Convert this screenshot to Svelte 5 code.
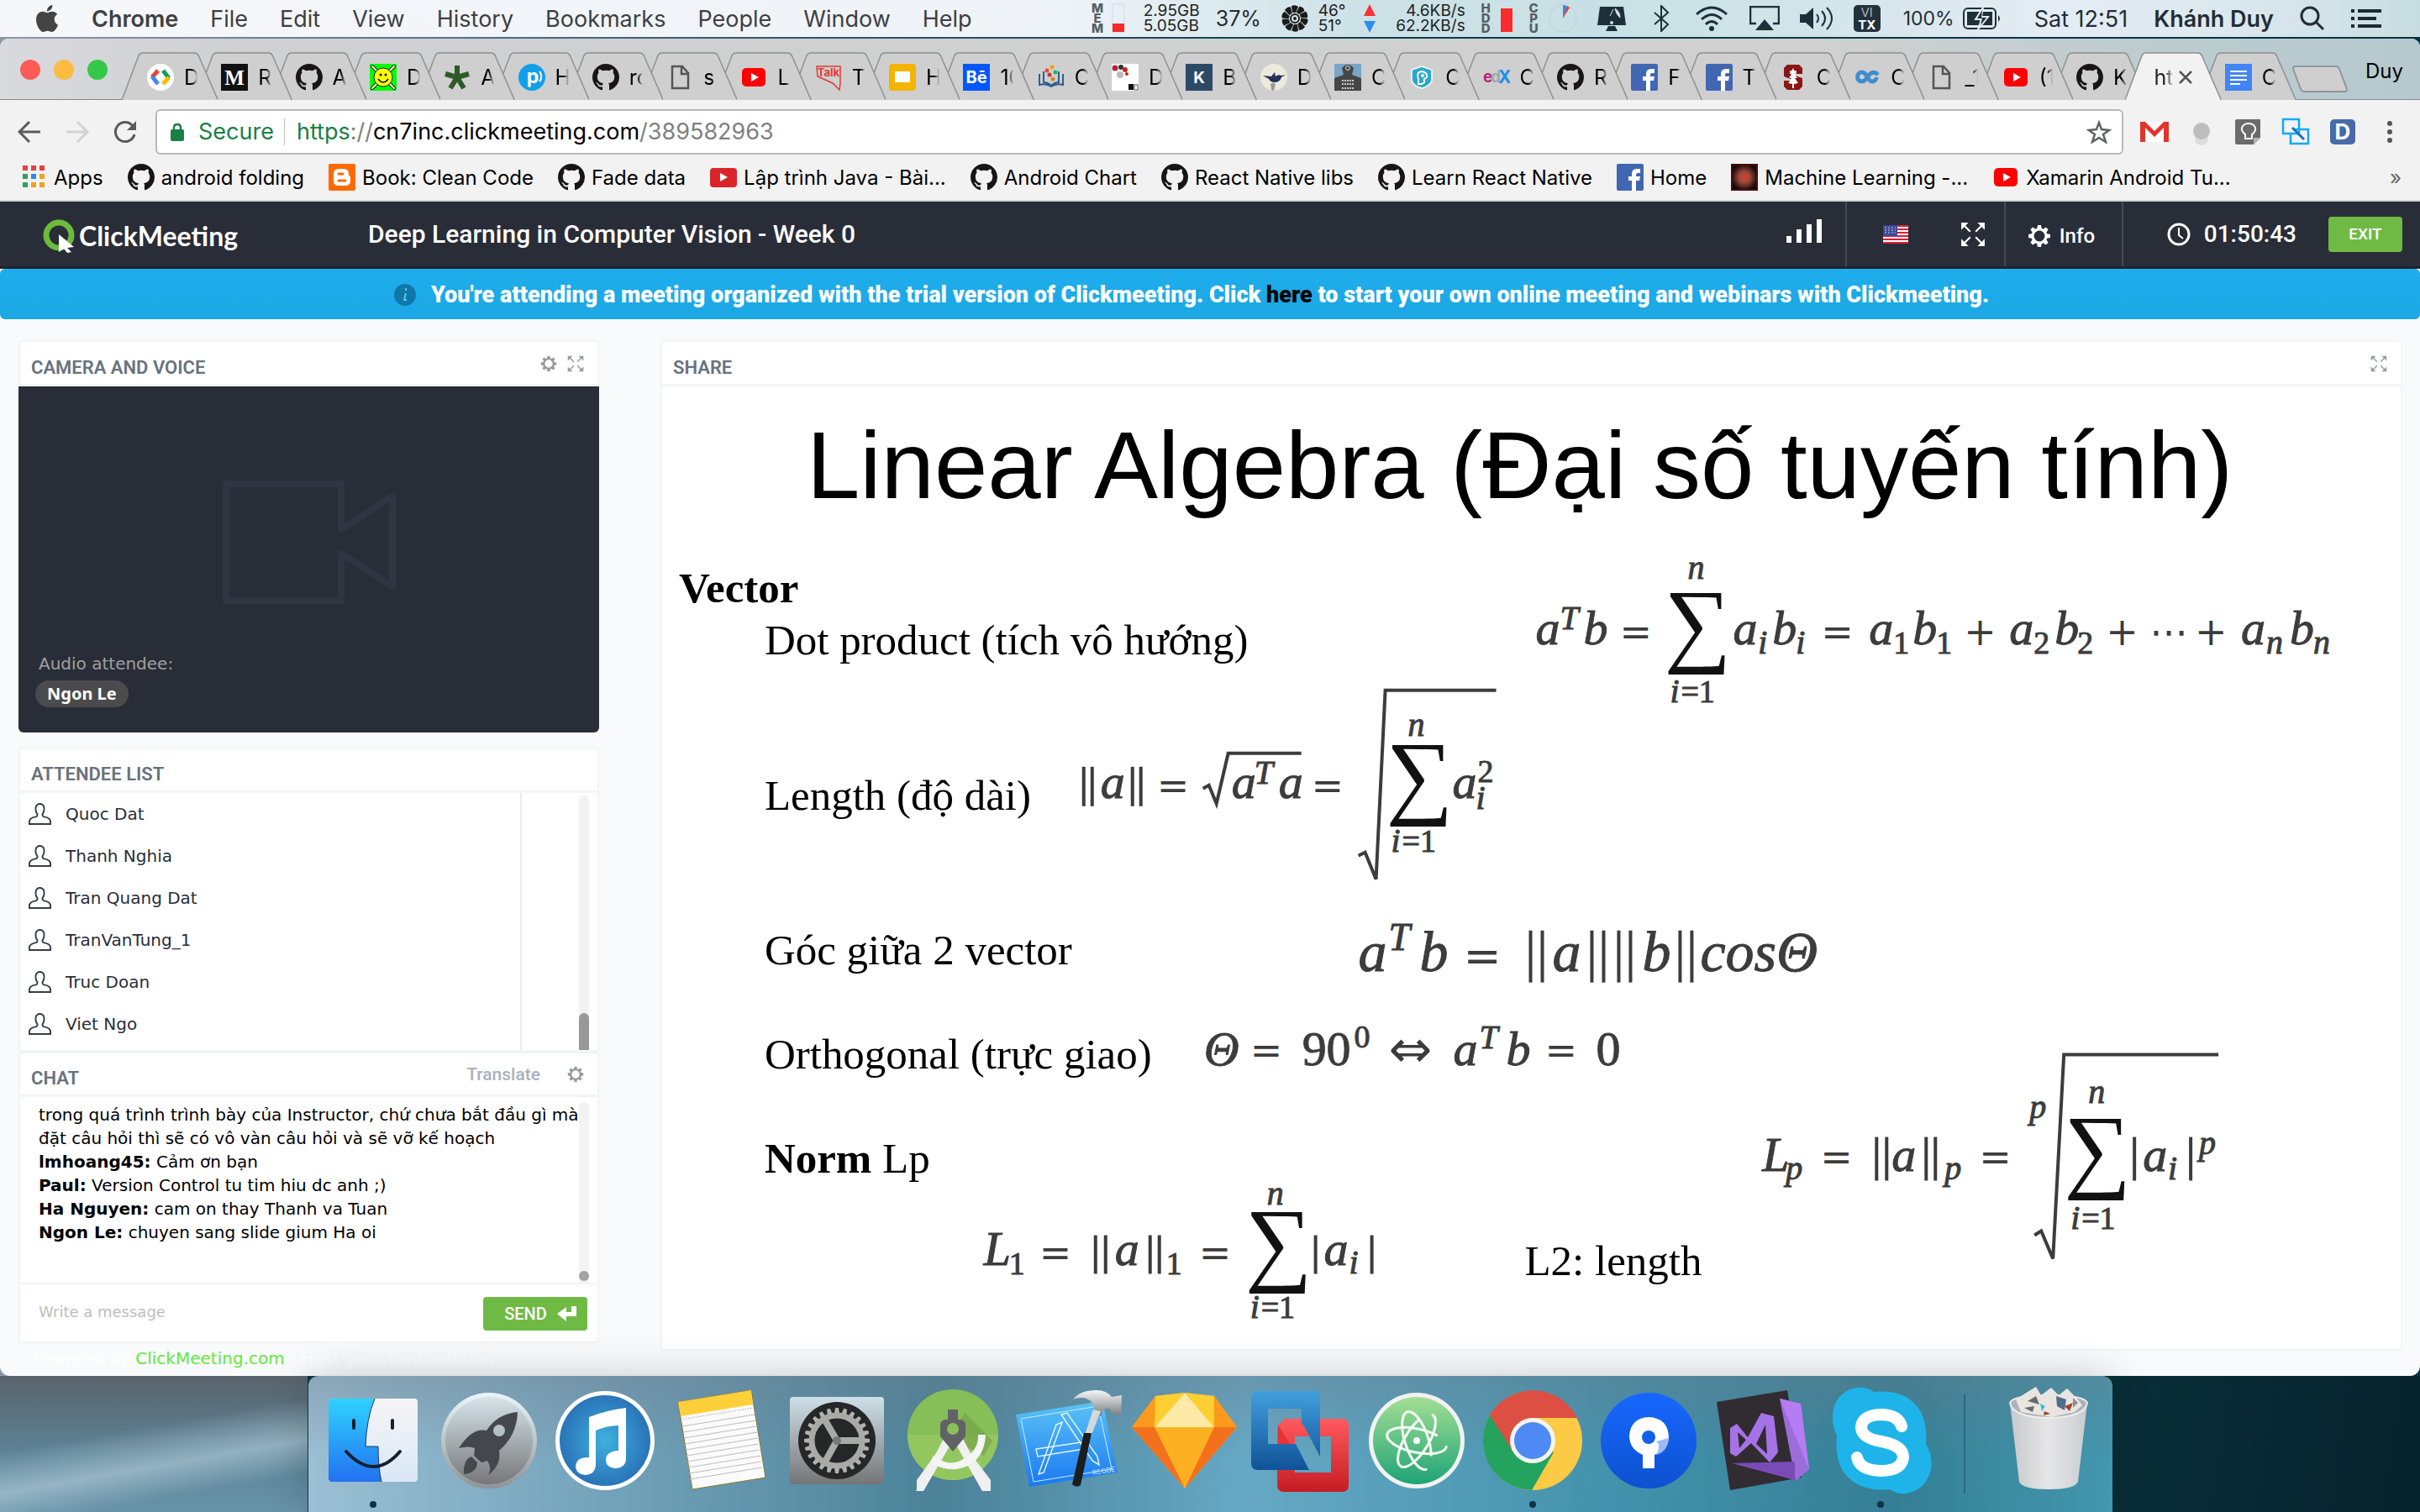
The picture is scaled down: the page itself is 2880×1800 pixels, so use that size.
<script>
  const menus = ['File', 'Edit', 'View', 'History', 'Bookmarks', 'People', 'Window', 'Help'];

  const tabs = [
    ['gdev', 'De'], ['medium', 'Re'], ['github', 'An'], ['smiley', 'De'], ['asterisk', 'An'],
    ['pcircle', 'Ho'], ['github', 'ro'], ['page', 's'], ['youtube', 'L'], ['talk', 'T'],
    ['slides', 'Ho'], ['behance', '10'], ['book', 'Co'], ['cards', 'De'], ['kbox', 'B'],
    ['bird', 'De'], ['mastery', 'Co'], ['shield', 'Co'], ['edx', 'Co'], ['github', 'Re'],
    ['facebook', 'F'], ['facebook', 'T'], ['stanford', 'Co'], ['infinity', 'Co'], ['page', '_1'],
    ['youtube', '(1'], ['github', 'K'], ['', 'ht'], ['gdoc', 'Co']
  ];
  const activeTab = 27;

  const bookmarks = [
    ['apps', 'Apps'], ['github', 'android folding'], ['blogger', 'Book: Clean Code'],
    ['github', 'Fade data'], ['youtubeOld', 'Lập trình Java - Bài...'], ['github', 'Android Chart'],
    ['github', 'React Native libs'], ['github', 'Learn React Native'], ['facebook', 'Home'],
    ['glow', 'Machine Learning -...'], ['youtube', 'Xamarin Android Tu...']
  ];

  const attendees = ['Quoc Dat', 'Thanh Nghia', 'Tran Quang Dat', 'TranVanTung_1', 'Truc Doan', 'Viet Ngo'];

  const messages = [
    ['', 'trong quá trình trình bày của Instructor, chứ chưa bắt đầu gì mà đặt câu hỏi thì sẽ có vô vàn câu hỏi và sẽ vỡ kế hoạch'],
    ['lmhoang45:', 'Cảm ơn bạn'],
    ['Paul:', 'Version Control tu tim hiu dc anh ;)'],
    ['Ha Nguyen:', 'cam on thay Thanh va Tuan'],
    ['Ngon Le:', 'chuyen sang slide gium Ha oi']
  ];

  const dock = [
    ['finder', true], ['launchpad', false], ['itunes', false], ['notes', false], ['settings', false],
    ['studio', false], ['xcode', false], ['sketch', false], ['vmware', false], ['atom', false],
    ['chrome', true], ['sourcetree', false], ['vs', false], ['skype', true]
  ];

  // Formula glyphs on the slide: [text, x, baseline, style]
  const glyphs = [
    ['a', 1828, 767, 'v'], ['T', 1857, 749, 's'], ['b', 1885, 767, 'v'], ['=', 1928, 768, 'o'],
    ['∑', 1981, 779, 'sum'], ['n', 2009, 689, 's'], ['i', 1988, 836, 's'], ['=1', 2001, 836, 'n'],
    ['a', 2063, 767, 'v'], ['i', 2093, 778, 's'], ['b', 2110, 767, 'v'], ['i', 2138, 778, 's'], ['=', 2168, 768, 'o'],
    ['a', 2225, 767, 'v'], ['1', 2254, 778, 'n'], ['b', 2277, 767, 'v'], ['1', 2305, 778, 'n'], ['+', 2338, 768, 'o'],
    ['a', 2392, 767, 'v'], ['2', 2421, 778, 'n'], ['b', 2446, 767, 'v'], ['2', 2473, 778, 'n'], ['+', 2507, 768, 'o'],
    ['⋯', 2559, 768, 'o'], ['+', 2613, 768, 'o'], ['a', 2668, 767, 'v'], ['n', 2698, 778, 's'], ['b', 2726, 767, 'v'], ['n', 2754, 778, 's'],
    ['a', 1310, 950, 'v'], ['=', 1377, 951, 'o'], ['a', 1466, 950, 'v'], ['T', 1493, 933, 's'], ['a', 1522, 950, 'v'], ['=', 1561, 951, 'o'],
    ['n', 1676, 876, 's'], ['∑', 1650, 960, 'sum'], ['i', 1656, 1014, 's'], ['=1', 1669, 1014, 'n'], ['a', 1729, 950, 'v'], ['2', 1759, 931, 'n'], ['i', 1757, 963, 's'],
    ['a', 1617, 1156, 'w'], ['T', 1653, 1131, 't'], ['b', 1690, 1156, 'w'], ['=', 1742, 1156, 'p'], ['a', 1848, 1156, 'w'],
    ['b', 1955, 1156, 'w'], ['cosΘ', 2024, 1156, 'w'],
    ['Θ', 1433, 1268, 'v'], ['=', 1488, 1266, 'o'], ['90', 1550, 1268, 'u'], ['0', 1612, 1247, 'n'], ['⇔', 1653, 1270, 'arr'],
    ['a', 1730, 1268, 'v'], ['T', 1761, 1248, 's'], ['b', 1793, 1268, 'v'], ['=', 1839, 1266, 'o'], ['0', 1900, 1268, 'u'],
    ['L', 2098, 1394, 'v'], ['p', 2126, 1404, 's'], ['=', 2167, 1393, 'o'], ['a', 2252, 1394, 'v'], ['p', 2315, 1404, 's'], ['=', 2356, 1393, 'o'],
    ['p', 2416, 1331, 's'], ['n', 2486, 1313, 's'], ['∑', 2457, 1405, 'sum'], ['i', 2465, 1463, 's'], ['=1', 2478, 1463, 'n'],
    ['a', 2551, 1394, 'v'], ['i', 2581, 1404, 's'], ['p', 2618, 1374, 's'],
    ['L', 1171, 1507, 'v'], ['1', 1201, 1518, 'n'], ['=', 1237, 1508, 'o'], ['a', 1327, 1507, 'v'], ['1', 1388, 1518, 'n'], ['=', 1427, 1508, 'o'],
    ['∑', 1482, 1517, 'sum'], ['n', 1508, 1434, 's'], ['i', 1488, 1570, 's'], ['=1', 1501, 1570, 'n'], ['a', 1576, 1507, 'v'], ['i', 1606, 1517, 's']
  ];

  const bars = [
    [1290, 913, 960], [1300, 913, 960], [1348, 913, 960], [1358, 913, 960],
    [1822, 1108, 1170], [1836, 1108, 1170], [1895, 1108, 1170], [1909, 1108, 1170],
    [1927, 1108, 1170], [1941, 1108, 1170], [2000, 1108, 1170], [2014, 1108, 1170],
    [2234, 1354, 1406], [2246, 1354, 1406], [2293, 1354, 1406], [2304, 1354, 1406], [2541, 1354, 1406], [2608, 1354, 1406],
    [1304, 1471, 1517], [1316, 1471, 1517], [1369, 1471, 1517], [1380, 1471, 1517], [1566, 1471, 1517], [1633, 1471, 1517]
  ];

  const teeth = Array.from({ length: 24 }, (_, i) => i * 15);
  const blades = Array.from({ length: 10 }, (_, i) => i * 36);
  let message = $state('');
</script>

{#snippet icon(kind)}
  <svg class="fav" viewBox="0 0 32 32" aria-hidden="true">
    {#if kind === 'github'}
      <path transform="scale(2)" fill="#171516" d="M8 0C3.58 0 0 3.58 0 8c0 3.54 2.29 6.53 5.47 7.59.4.07.55-.17.55-.38 0-.19-.01-.82-.01-1.49-2.01.37-2.53-.49-2.69-.94-.09-.23-.48-.94-.82-1.13-.28-.15-.68-.52-.01-.53.63-.01 1.08.58 1.23.82.72 1.21 1.87.87 2.33.66.07-.52.28-.87.51-1.07-1.78-.2-3.64-.89-3.64-3.95 0-.87.31-1.59.82-2.15-.08-.2-.36-1.02.08-2.12 0 0 .67-.21 2.2.82.64-.18 1.32-.27 2-.27s1.36.09 2 .27c1.53-1.04 2.2-.82 2.2-.82.44 1.1.16 1.92.08 2.12.51.56.82 1.27.82 2.15 0 3.07-1.87 3.75-3.65 3.95.29.25.54.73.54 1.48 0 1.07-.01 1.93-.01 2.2 0 .21.15.46.55.38A8.01 8.01 0 0 0 16 8c0-4.42-3.58-8-8-8z" />
    {:else if kind === 'gdev'}
      <circle cx="16" cy="16" r="16" fill="#fff" />
      <path d="M13 8L6 16" stroke="#ea4335" stroke-width="5" /><path d="M6 15l7 9" stroke="#4285f4" stroke-width="5" />
      <path d="M19 8l7 9" stroke="#0f9d58" stroke-width="5" /><path d="M26 16l-7 8" stroke="#fbbc05" stroke-width="5" />
    {:else if kind === 'medium'}
      <rect width="32" height="32" fill="#111" /><text x="16" y="25" class="serif b" font-size="25" fill="#fff" text-anchor="middle">M</text>
    {:else if kind === 'smiley'}
      <rect width="32" height="32" fill="#0f0" />
      <path d="M3 3l26 26M29 3L3 29" stroke="#222" stroke-width="4" stroke-linecap="round" /><path d="M3 3l26 26M29 3L3 29" stroke="#e8ffc8" stroke-width="2" stroke-linecap="round" />
      <circle cx="16" cy="16" r="11" fill="#ff0" stroke="#222" /><path d="M10 18q6 8 12 0" fill="none" stroke="#111" stroke-width="1.5" /><circle cx="13" cy="13" r="1.5" /><circle cx="19" cy="13" r="1.5" />
    {:else if kind === 'asterisk'}
      <path d="M16 2v15M2 12l14 4M30 12l-14 4M16 16l8 13M16 16L8 29" stroke="#2d5a27" stroke-width="6" />
    {:else if kind === 'pcircle'}
      <circle cx="16" cy="16" r="16" fill="#139fe8" /><text x="17" y="23" class="sans b" font-size="23" fill="#fff" text-anchor="middle">p</text><path d="M25 9a9 9 0 0 1 0 12" fill="none" stroke="#fff" stroke-width="2" />
    {:else if kind === 'page'}
      <path d="M7 3h12l7 8v18H7zM18 3v9h8" fill="none" stroke="#555" stroke-width="2.5" />
    {:else if kind === 'youtube'}
      <rect x="2" y="5" width="28" height="22" rx="5" fill="#f00" /><path d="M13 11l9 5-9 5z" fill="#fff" />
    {:else if kind === 'youtubeOld'}
      <rect y="5" width="32" height="23" rx="4" fill="#d9252a" /><path d="M12 11l9 5-9 5z" fill="#fff" />
    {:else if kind === 'talk'}
      <path d="M2 3h28v20l-1 8-8-8L3 15z" fill="none" stroke="#e53935" stroke-width="1.5" /><text x="16" y="15" class="sans b" font-size="13" fill="#e53935" text-anchor="middle">Talk</text>
    {:else if kind === 'slides'}
      <rect width="32" height="32" rx="4" fill="#f5b400" /><rect x="7" y="9" width="18" height="13" fill="#fff" />
    {:else if kind === 'behance'}
      <rect width="32" height="32" fill="#0057ff" /><text x="16" y="23" class="sans b" font-size="20" fill="#fff" text-anchor="middle">Bē</text>
    {:else if kind === 'book'}
      <path d="M2 12v13q8-2 14 2 6-4 14-2V12M7 9v13q5 0 9 4 4-4 9-4V9" fill="none" stroke="#2b5f8e" stroke-width="2" />
      <circle cx="11" cy="8" r="2.5" fill="#e74c3c" /><circle cx="17" cy="4" r="2.5" fill="#f39c12" /><circle cx="21" cy="10" r="2.5" fill="#27ae60" /><circle cx="14" cy="13" r="2.5" fill="#c0392b" /><circle cx="18" cy="18" r="2.5" fill="#e67e22" />
    {:else if kind === 'cards'}
      <rect width="32" height="32" fill="#fff" /><circle cx="4" cy="5" r="3.5" fill="#b23" /><circle cx="11" cy="4" r="3" fill="#333" /><circle cx="16" cy="7" r="3" fill="#c22" /><circle cx="10" cy="13" r="4" fill="#bbb" /><circle cx="18" cy="12" r="2" fill="#c22" /><rect x="20" y="24" width="6" height="7" fill="#111" /><rect x="27" y="25" width="4" height="6" fill="none" stroke="#555" />
    {:else if kind === 'kbox'}
      <rect width="32" height="32" fill="#2c4a66" /><text x="16" y="23" class="sans b" font-size="19" fill="#fff" text-anchor="middle">K</text>
    {:else if kind === 'bird'}
      <circle cx="16" cy="16" r="16" fill="#eceadb" /><path d="M3 14l10 1 4-5 1 5q3-3 7-1l5-1-5 3q-2 6-8 6-5 0-7-4z" fill="#25305a" /><path d="M12 24q3-3 6 0l-2 8-3-1z" fill="#999" />
    {:else if kind === 'mastery'}
      <rect width="32" height="32" fill="#79a5c9" /><path d="M0 32V17l11-4-2-8q7-8 14 0l-2 8 11 4v15z" fill="#464646" /><circle cx="16" cy="5" r="2.5" fill="none" stroke="#ddd" /><path d="M9 20h14M9 24h14M9 29h14" stroke="#ccc" stroke-width="2" stroke-dasharray="2 1" />
    {:else if kind === 'shield'}
      <path d="M16 3l12 4v13q-3 7-12 9Q7 27 4 20V7z" fill="#2aa9cc" stroke="#fff" stroke-width="1.5" /><path d="M12 24v-6q-3-8 4-9 7 1 6 7l-3 2v4l-3 2z" fill="none" stroke="#fff" stroke-width="2" /><circle cx="17" cy="14" r="2" fill="#fff" />
    {:else if kind === 'edx'}
      <text x="0" y="22" class="sans b" font-size="19" fill="#b7257a">e</text><text x="9" y="22" class="sans b" font-size="19" fill="#9aa">d</text><text x="18" y="23" class="sans b" font-size="21" fill="#1f8fe5">X</text>
    {:else if kind === 'facebook'}
      <rect width="32" height="32" rx="2" fill="#4267b2" /><path d="M18 32V20h-4v-5h4v-3q0-6 6-6h4v5h-3q-2 0-2 2v2h5l-1 5h-4v12z" fill="#fff" />
    {:else if kind === 'stanford'}
      <path d="M9 1h14l4 4v7h-7V8h-8v4l15 5v10l-4 4H9l-4-4v-7h7v4h8v-3L5 15V5z" fill="#8c1515" /><path d="M16 5l3 6h-2l4 6h-3l4 6h-5v6h-2v-6h-5l4-6h-3l4-6h-2z" fill="#fff" />
    {:else if kind === 'infinity'}
      <path d="M29 13q-4-4-8-2-2 1-5 5-3 5-6 5a5 5 0 0 1 0-11q3 0 6 5 3 6 6 6a5 5 0 0 0 5-5" fill="none" stroke="#3f8dd0" stroke-width="5" />
    {:else if kind === 'gdoc'}
      <rect width="32" height="32" fill="#4285f4" /><path d="M6 9h20M6 14h20M6 19h20M6 24h12" stroke="#fff" stroke-width="2" />
    {:else if kind === 'apps'}
      {#each [0, 1, 2] as r}{#each [0, 1, 2] as c}
          <rect x={3 + c * 10} y={2 + r * 10} width="6" height="6" fill={[['#e8403c', '#e8403c', '#e8403c'], ['#34a05a', '#2a8be8', '#f0a020'], ['#34a05a', '#f0a020', '#f0a020']][r][c]} />
        {/each}{/each}
    {:else if kind === 'blogger'}
      <rect width="32" height="32" rx="2" fill="#ff6a00" /><path d="M12 6h6q6 0 6 6v2q2 0 2 2v4q0 6-6 6h-8q-6 0-6-6v-8q0-6 6-6z" fill="#fff" /><path d="M12 12h5M12 20h8" stroke="#ff6a00" stroke-width="3" stroke-linecap="round" />
    {:else if kind === 'glow'}
      <defs><radialGradient id="glow"><stop offset="0" stop-color="#e03a2c" /><stop offset=".4" stop-color="#9c4a3c" /><stop offset="1" stop-color="#120808" /></radialGradient></defs>
      <rect width="32" height="32" fill="url(#glow)" /><rect x="1" y="1" width="30" height="30" fill="none" stroke="#4a0c0c" stroke-width="2" />
    {/if}
  </svg>
{/snippet}

{#snippet gear()}
  <svg viewBox="0 0 28 28" aria-hidden="true">
    <circle cx="14" cy="14" r="8" fill="none" stroke="currentColor" stroke-width="3" />
    {#each [0, 45, 90, 135, 180, 225, 270, 315] as a}
      <path d="M11 6l1-5h4l1 5z" fill="currentColor" transform="rotate({a} 14 14)" />
    {/each}
  </svg>
{/snippet}

{#snippet expand()}
  <svg viewBox="0 0 28 28" aria-hidden="true">
    <path d="M1 9V1h8zM19 1h8v8zM27 19v8h-8zM9 27H1v-8z" fill="currentColor" />
    <path d="M4 4l7 7M24 4l-7 7M24 24l-7-7M4 24l7-7" stroke="currentColor" stroke-width="2" />
  </svg>
{/snippet}

{#snippet dockIcon(kind)}
  <svg class="dock-svg" viewBox="0 0 138 162" aria-hidden="true">
    {#if kind === 'finder'}
      <defs><linearGradient id="fa" x2="0" y2="1"><stop stop-color="#2ed3ff" /><stop offset="1" stop-color="#2371f0" /></linearGradient><linearGradient id="fb" x2="0" y2="1"><stop stop-color="#f6f5f6" /><stop offset="1" stop-color="#d9e7f6" /></linearGradient></defs>
      <rect x="16" y="27" width="106" height="99" rx="4" fill="url(#fb)" />
      <path d="M20 27h51q-10 24-11 57h15q0 24 4 42H20q-4 0-4-4V31q0-4 4-4z" fill="url(#fa)" />
      <path d="M71 27q-10 24-11 57h15q0 24 4 42" fill="none" stroke="#1c3a5c" />
      <path d="M37 90q33 36 64 0" fill="none" stroke="#122030" stroke-width="4" stroke-linecap="round" /><path d="M46 53v9M92 53v9" stroke="#122030" stroke-width="4" stroke-linecap="round" />
    {:else if kind === 'launchpad'}
      <defs><linearGradient id="la" x2="0" y2="1"><stop stop-color="#d6e4ea" /><stop offset="1" stop-color="#767779" /></linearGradient><linearGradient id="lb" x2="0" y2="1"><stop stop-color="#e9f7fc" /><stop offset="1" stop-color="#8f9496" /></linearGradient></defs>
      <circle cx="69" cy="77" r="57" fill="url(#lb)" /><circle cx="69" cy="77" r="52" fill="url(#la)" />
      <path d="M103 43q-24 2-37 22-17-4-33 21 12-3 19 0l-1 9 9 8 7-2q6 9 1 17 16-12 13-29 21-18 22-46z" fill="#44484c" /><path d="M48 96q-10 4-9 21 16-2 16-14z" fill="#44484c" /><circle cx="81" cy="65" r="7" fill="#b7c0c4" />
    {:else if kind === 'itunes'}
      <defs><radialGradient id="ia"><stop stop-color="#3fb0de" /><stop offset="1" stop-color="#2a74b8" /></radialGradient></defs>
      <circle cx="69" cy="77" r="59" fill="#fff" /><circle cx="69" cy="77" r="54" fill="url(#ia)" />
      <path d="M50 49q20-8 44-11v60q0 11-12 12-12-1-12-10 0-9 12-11h3V59q-14 0-27 6v42q-1 10-12 11-12-1-12-11 1-9 12-10h4z" fill="#fff" />
    {:else if kind === 'notes'}
      <path d="M18 31l87-14 17 104-87 14z" fill="#fbfbfb" stroke="#8a7a2a" /><path d="M18 31l87-14 2 17-86 14z" fill="#fdd03a" />
      <path d="M21 52l86-14" stroke="#888" stroke-dasharray="1 2" />
      {#each [0, 1, 2, 3, 4, 5, 6, 7, 8, 9] as n}<path d="M{23 + n} {60 + n * 7}l86-14" stroke="#bcbcbc" />{/each}
    {:else if kind === 'settings'}
      <defs><linearGradient id="sa" x2="0" y2="1"><stop stop-color="#cfe0e8" /><stop offset="1" stop-color="#747577" /></linearGradient></defs>
      <rect x="13" y="25" width="112" height="104" rx="4" fill="url(#sa)" /><circle cx="69" cy="77" r="46" fill="#262729" />
      {#each teeth as a}<path d="M66 45l1-7h4l1 7z" fill="#b2b2ae" transform="rotate({a} 69 77)" />{/each}
      <circle cx="69" cy="77" r="30" fill="none" stroke="#a9a9a5" stroke-width="7" />
      <path d="M69 77h28M69 77L55 53M69 77l-14 25" stroke="#a9a9a5" stroke-width="8" /><circle cx="69" cy="77" r="5" fill="#777" />
    {:else if kind === 'studio'}
      <circle cx="69" cy="70" r="54" fill="#86be58" /><path d="M15 70a54 54 0 0 0 108 0z" fill="#94c660" /><path d="M83 44l33 33-10 18-40-20z" fill="#6f9f45" opacity=".6" />
      <path d="M62 74L26 124v13l8-9 32-47zM76 74l38 50v13l-8-9-34-48z" fill="#eee" /><path d="M34 137l-9 0 34-64 10 4zM104 137h10L80 73l-10 4z" fill="#f0f0f0" />
      <path d="M46 95q20 16 38 2 16-10 15-27h9q-1 26-21 37-22 10-45-4z" fill="#f5f5f5" />
      <path d="M63 40h12v12h4q5 2 5 6v14L69 90 54 72V58q0-4 5-6h4z" fill="#616266" /><circle cx="69" cy="63" r="7" fill="#8ac058" />
    {:else if kind === 'xcode'}
      <defs><linearGradient id="xa" x2="0" y2="1"><stop stop-color="#5bc4f5" /><stop offset="1" stop-color="#1a78f0" /></linearGradient><linearGradient id="xb" x2="0" y2="1"><stop stop-color="#f6f6f6" /><stop offset="1" stop-color="#777b80" /></linearGradient></defs>
      <path d="M6 46l103-16 18 85-105 17z" fill="url(#xa)" /><path d="M12 51l92-15 16 75-93 15z" fill="none" stroke="#c9ebff" />
      <path d="M30 87l60-9 2 8-60 10zM54 58l7-3-22 60-6 2zM60 46l7-2 36 52 2 10-8-5z" fill="none" stroke="#e3f5ff" stroke-width="1.5" />
      <text x="97" y="118" class="sans" font-size="8" fill="#d9f0ff" transform="rotate(-9 97 118)">XCODE</text>
      <path d="M74 28q8-11 28-11 12 0 18 8l12-2-1 24-10-2-4-7-6 2q-3 2-3 8l-10-2q2-9-2-15-8-8-22-3z" fill="url(#xb)" /><path d="M98 40l9 2-11 28h-8z" fill="#d5d7da" /><path d="M87 68h9l-13 62q-5 4-10-1z" fill="#1c1d1f" />
    {:else if kind === 'sketch'}
      <path d="M34 24l35-4 35 4 27 37-62 73L6 61z" fill="#fdb021" /><path d="M34 24L6 61h27zM104 24l27 37h-27z" fill="#fb9a1c" /><path d="M6 61h27l36 73z" fill="#f3701d" /><path d="M131 61h-27l-35 73z" fill="#f3701d" />
      <path d="M69 20L33 61h71z" fill="#fdeaa6" /><path d="M34 24l35-4-36 41zM104 24l-35-4 35 41z" fill="#fdcf33" />
    {:else if kind === 'vmware'}
      <defs><linearGradient id="va" x2="0" y2="1"><stop stop-color="#429fdd" /><stop offset="1" stop-color="#0f5298" /></linearGradient><linearGradient id="vb" x2="0" y2="1"><stop stop-color="#ff5a5f" /><stop offset="1" stop-color="#c41c22" /></linearGradient></defs>
      <path fill-rule="evenodd" d="M50 51h68q8 0 8 8v71q0 8-8 8H49q-8 0-8-8V60zM62 72v43h43V72z" fill="url(#vb)" />
      <path fill-rule="evenodd" d="M19 18h65q8 0 8 8v70L72 58h-2V39H30v42h33l16 31H18q-8 0-8-8V26q0-8 9-8z" fill="url(#va)" />
      <path d="M42 58v23h14z" fill="#e63238" />
    {:else if kind === 'atom'}
      <defs><linearGradient id="aa" x2="0" y2="1"><stop stop-color="#a4de94" /><stop offset="1" stop-color="#1ea477" /></linearGradient></defs>
      <circle cx="69" cy="77" r="57" fill="#f2f2f2" /><circle cx="69" cy="77" r="52" fill="url(#aa)" />
      <g fill="none" stroke="#f4fff4" stroke-width="3" stroke-linecap="round"><ellipse cx="69" cy="77" rx="36" ry="14" transform="rotate(12 69 77)" stroke-dasharray="145 20" /><ellipse cx="69" cy="77" rx="36" ry="14" transform="rotate(72 69 77)" stroke-dasharray="145 20" /><ellipse cx="69" cy="77" rx="36" ry="14" transform="rotate(-58 69 77)" stroke-dasharray="145 20" /></g><circle cx="69" cy="77" r="4" fill="#fff" />
    {:else if kind === 'chrome'}
      <circle cx="69" cy="77" r="59" fill="#fcca45" /><path d="M18 47a59 59 0 0 0 50 89l26-45-25-14z" fill="#24a35e" /><path d="M18 47a59 59 0 0 1 104 3H69v27z" fill="#dd4f43" /><path d="M18 47l28 44 23-14z" fill="#dd4f43" />
      <circle cx="69" cy="77" r="27" fill="#f4f4f4" /><circle cx="69" cy="77" r="22" fill="#4d8af4" />
    {:else if kind === 'sourcetree'}
      <defs><linearGradient id="st" x2="0" y2="1"><stop stop-color="#1768ff" /><stop offset="1" stop-color="#0d51cf" /></linearGradient></defs>
      <circle cx="69" cy="77" r="57" fill="url(#st)" /><path d="M62 110V94Q46 87 46 71q2-21 23-22 23 1 24 24-1 14-17 21v16z" fill="#fff" /><circle cx="69" cy="73" r="8" fill="#1160ea" /><path d="M78 78q6 4 0 16 14-4 15-20z" fill="#9dbcf5" />
    {:else if kind === 'vs'}
      <path d="M12 31l84-14 17 104-85 15z" fill="#302c31" /><path d="M87 27l25 6 10 78-16 14z" fill="#9d6cdb" /><path d="M87 27l25 6 10 78z" fill="#b57cf3" /><path d="M30 104l75-2v22z" fill="#7a4bb8" />
      <path fill-rule="evenodd" d="M28 62l8-5 13 16 16-29 15 4 5 43-10 12-22-23-18 16-7-4zM37 67l2 19 8-10zM70 58l-11 23 13 12z" fill="#a673e6" />
    {:else if kind === 'skype'}
      <path d="M41 14q12-1 20 5 40-4 56 24 8 16 6 38 10 16 5 34-7 21-28 25-12 1-20-5-38 4-56-22-10-18-7-42-6-12-5-26Q16 18 41 14z" fill="#1fb4e9" />
      <path d="M94 60Q90 46 69 46q-23 1-23 16 1 12 24 16 26 5 26 19-2 16-27 16-25-1-28-16" fill="none" stroke="#fff" stroke-width="14" stroke-linecap="round" />
    {:else if kind === 'trash'}
      <defs><linearGradient id="ta"><stop stop-color="#c6c9cc" /><stop offset=".5" stop-color="#e6e6e8" /><stop offset="1" stop-color="#c9cdd0" /></linearGradient></defs>
      <path d="M23 32h92l-11 94q-4 9-35 9t-35-9z" fill="url(#ta)" /><path d="M23 32q3-9 46-9t46 9q-3 17-46 18-43-1-46-18z" fill="#a9b3b8" stroke="#eee" stroke-width="2" />
      <path d="M30 28l14-9 10-6 6 10 12-9 9 9 10-8 12 12 6 8-9 8-28 6-36-6z" fill="#e9e6e2" /><path d="M44 30l10-6 4 10zM40 38l12-2-2 7z" fill="#6a6a6a" /><path d="M78 24l12 4-2 13-9-5z" fill="#4f6d8d" /><path d="M59 33l6 3-4 6z" fill="#2cc0d8" /><path d="M88 36l10-4-4 10zM64 42l7 3-8 2z" fill="#a2432c" /><path d="M98 26l6 6-6 6z" fill="#8a8f94" />
    {/if}
  </svg>
{/snippet}

<div class="desktop">
  <header class="menubar">
    <svg class="apple" viewBox="0 0 24 24" aria-label="Apple menu"><path d="M12.152 6.896c-.948 0-2.415-1.078-3.96-1.04-2.04.027-3.91 1.183-4.961 3.014-2.117 3.675-.546 9.103 1.519 12.09 1.013 1.454 2.208 3.09 3.792 3.039 1.52-.065 2.09-.987 3.935-.987 1.831 0 2.35.987 3.96.948 1.637-.026 2.676-1.48 3.676-2.948 1.156-1.688 1.636-3.325 1.662-3.415-.039-.013-3.182-1.221-3.22-4.857-.026-3.04 2.48-4.494 2.597-4.559-1.429-2.09-3.623-2.324-4.39-2.376-2-.156-3.675 1.09-4.61 1.09zM15.53 3.83c.843-1.012 1.4-2.427 1.245-3.83-1.207.052-2.662.805-3.532 1.818-.78.896-1.454 2.338-1.273 3.714 1.338.104 2.715-.688 3.559-1.701" fill="#444" /></svg>
    <nav class="menus">
      <b>Chrome</b>
      {#each menus as m}<span>{m}</span>{/each}
    </nav>
    <div class="status">
      <span class="stack3"><i>M</i><i>E</i><i>M</i></span>
      <svg class="w16" viewBox="0 0 16 36"><rect x="1" y="1" width="14" height="34" rx="2" fill="none" stroke="#dfe6ea" stroke-width="2" /><rect x="1" y="24" width="14" height="10" fill="#f32a2a" /></svg>
      <span class="two mem">2.95GB<br />5.05GB</span>
      <span class="pct">37%</span>
      <svg class="w32" viewBox="0 0 32 32">
        {#each blades as a}<path d="M13 9L12 1q5-2 8 1l-3 7z" fill="#1b1b1b" transform="rotate({a} 16 16)" />{/each}
        <circle cx="16" cy="16" r="5" fill="none" stroke="#1b1b1b" stroke-width="2" /><circle cx="16" cy="16" r="2" fill="#1b1b1b" />
      </svg>
      <span class="two temp">46°<br />51°</span>
      <svg class="w16 arrows" viewBox="0 0 16 36"><path d="M8 1l7 14H1z" fill="#f6303a" /><path d="M8 35L1 21h14z" fill="#2a8df0" /></svg>
      <span class="two rate">4.6KB/s<br />62.2KB/s</span>
      <span class="stack3 hdd"><i>H</i><i>D</i><i>D</i></span>
      <svg class="w16" viewBox="0 0 16 36"><rect x="1" y="1" width="14" height="34" rx="2" fill="none" stroke="#d3e2e6" stroke-width="2" /><rect x="1" y="6" width="14" height="28" fill="#f82c2c" /></svg>
      <span class="stack3 cpu"><i>C</i><i>P</i><i>U</i></span>
      <svg class="w36" viewBox="0 0 36 36"><circle cx="18" cy="18" r="16" fill="none" stroke="#c3d8dd" stroke-width="2" /><path d="M18 18V2l5 1z" fill="#2a8df0" /><path d="M18 18l5-15 3 2z" fill="#f33" /></svg>
      <svg class="w36 clean" viewBox="0 0 36 30"><path d="M4 1h28l3 22H1zM14 24h8l3 6H11z" fill="#1d2f38" /><path d="M22 3q6 4 6 11-5-4-6-11zM20 4l-4 8" stroke="#cfe0e5" fill="#cfe0e5" /><circle cx="18" cy="20" r="2" fill="#cfe0e5" /></svg>
      <svg class="w20 bt" viewBox="0 0 20 32"><path d="M2 9l16 14-8 8V1l8 8L2 23" fill="none" stroke="#1d2f38" stroke-width="2" /></svg>
      <svg class="w40 wifi" viewBox="0 0 40 30"><path d="M2 10q18-16 36 0M8 16q12-11 24 0M13 22q7-7 14 0" fill="none" stroke="#1d2f38" stroke-width="3" /><circle cx="20" cy="27" r="3" fill="#1d2f38" /></svg>
      <svg class="w36 air" viewBox="0 0 36 30"><path d="M8 21H1V1h34v20h-7" fill="none" stroke="#1d2f38" stroke-width="2.5" /><path d="M18 16l11 13H7z" fill="#1d2f38" /></svg>
      <svg class="w42 vol" viewBox="0 0 42 30"><path d="M0 10h7l9-8v26l-9-8H0z" fill="#1d2f38" /><path d="M20 10q4 5 0 10M26 6q8 9 0 18M32 2q12 13 0 26" fill="none" stroke="#1d2f38" stroke-width="2" /></svg>
      <span class="lang"><i>VI</i><b>TX</b></span>
      <span class="batt">100%</span>
      <svg class="w46" viewBox="0 0 46 26"><rect x="1" y="1" width="38" height="24" rx="5" fill="none" stroke="#1d2f38" stroke-width="2" /><rect x="5" y="5" width="30" height="16" fill="#1d2f38" /><path d="M24 0l-9 14h7l-4 12 12-15h-8z" fill="#e4eaf2" stroke="#e4eaf2" stroke-width="2" /><path d="M23 3l-6 10h6l-2 8 7-9h-6z" fill="#1d2f38" /><path d="M42 9q4 4 0 8z" fill="#1d2f38" /></svg>
      <span class="clock">Sat 12:51</span>
      <b class="user">Khánh Duy</b>
      <svg class="w30 find" viewBox="0 0 30 30"><circle cx="12" cy="12" r="10" fill="none" stroke="#222d33" stroke-width="3" /><path d="M19 19l9 9" stroke="#222d33" stroke-width="3" /></svg>
      <svg class="w36 list" viewBox="0 0 36 22"><path d="M0 2h4M0 11h4M0 20h4M8 2h28M8 11h22M8 20h28" stroke="#1d2a30" stroke-width="4" /></svg>
    </div>
  </header>

  <main class="window">
    <div class="tabstrip">
      <div class="lights"><button aria-label="Close" class="red"></button><button aria-label="Minimise" class="amber"></button><button aria-label="Zoom" class="green"></button></div>
      <div class="tabs">
        {#each tabs as [kind, label], i}
          <div class="tab" class:active={i === activeTab} style="z-index:{i === activeTab ? 60 : 40 - i}">
            <svg class="shape" viewBox="0 0 114 57" preserveAspectRatio="none" aria-hidden="true"><path d="M0 57L20 4q2-3 4-3h63q2 0 4 3l23 53" /></svg>
            {#if kind}{@render icon(kind)}{/if}
            <span class="label">{label}</span>
            {#if i === activeTab}<button class="close" aria-label="Close tab"><svg viewBox="0 0 16 16"><path d="M1 1l14 14M15 1L1 15" stroke="#555" stroke-width="2.5" /></svg></button>{/if}
          </div>
        {/each}
      </div>
      <div class="strip-end">
        <button class="newtab" aria-label="New tab"><svg viewBox="0 0 66 32"><path d="M3 1h49q3 0 4 3l9 24q0 3-3 3H14q-3 0-4-3L1 4q0-3 2-3z" fill="#cfcfcf" stroke="#8f9799" stroke-width="2" /></svg></button>
        <span class="profile">Duy</span>
      </div>
    </div>

    <div class="toolbar">
      <button class="nav" aria-label="Back"><svg viewBox="0 0 28 28"><path d="M27 14H3M14 2L2 14l12 12" fill="none" stroke="#5a5a5a" stroke-width="3" /></svg></button>
      <button class="nav" aria-label="Forward"><svg viewBox="0 0 28 28"><path d="M1 14h24M14 2l12 12-12 12" fill="none" stroke="#d2d2d2" stroke-width="3" /></svg></button>
      <button class="nav" aria-label="Reload"><svg viewBox="0 0 28 28"><path d="M23 7a11.500 11.500 0 1 0 2 10" fill="none" stroke="#5a5a5a" stroke-width="3" /><path d="M27 1v11H16z" fill="#5a5a5a" /></svg></button>
      <div class="omnibox">
        <svg class="lock" viewBox="0 0 16 22"><rect y="8" width="16" height="14" rx="2" fill="#188045" /><path d="M4 9V6q0-4 4-4t4 4v3" fill="none" stroke="#188045" stroke-width="2.500" /></svg>
        <span class="secure">Secure</span>
        <span class="bar"></span>
        <a class="url" href="https://cn7inc.clickmeeting.com/389582963"><span class="g">https</span><span class="m">://</span>cn7inc.clickmeeting.com<span class="m">/389582963</span></a>
        <svg class="star" viewBox="0 0 30 28"><path d="M15 3l3 8 9 1-7 5 3 9-8-5-8 5 3-9-7-5 9-1z" fill="none" stroke="#5f6368" stroke-width="2.500" /></svg>
      </div>
      <div class="exts">
        <svg viewBox="0 0 34 34"><rect y="5" width="34" height="24" fill="#e0352b" /><path d="M6 5h22L17 16zM6 12l11 11 11-11v17H6z" fill="#fff" /></svg>
        <svg viewBox="0 0 34 34"><circle cx="17" cy="25" r="8" fill="#dcdcdc" /><circle cx="17" cy="16" r="10" fill="#bdbdbd" /></svg>
        <svg viewBox="0 0 34 34"><path d="M3 2h28v22l-8 8H3q-2 0-2-2V4q0-2 2-2z" fill="#6b6b6b" /><path d="M31 24h-8v8z" fill="#b5b5b5" /><path d="M13 20q-5-4-4-8 2-5 8-5t8 5q1 4-4 8v5h-8z" fill="none" stroke="#fff" stroke-width="2" /></svg>
        <svg viewBox="0 0 34 34"><path d="M2 2h19v17H2zM15 14h17v17H11V19" fill="none" stroke="#14a9f5" stroke-width="2.500" /><path d="M13 12l14 14" stroke="#1673b8" stroke-width="3" /></svg>
        <svg viewBox="0 0 34 34"><rect x="2" y="2" width="30" height="30" rx="5" fill="#466ba8" /><text x="17" y="26" class="sans b" font-size="26" fill="#fff" text-anchor="middle">D</text></svg>
        <svg viewBox="0 0 34 34" class="dots"><circle cx="17" cy="7" r="3" /><circle cx="17" cy="17" r="3" /><circle cx="17" cy="27" r="3" /></svg>
      </div>
    </div>

    <nav class="bookmarks">
      {#each bookmarks as [kind, label]}
        <a href="#{kind}">{@render icon(kind)}<span>{label}</span></a>
      {/each}
      <button class="more" aria-label="More bookmarks">»</button>
    </nav>

    <header class="cm-head">
      <div class="logo">
        <svg viewBox="0 0 38 40" aria-hidden="true"><circle cx="19" cy="19" r="15" fill="none" stroke="#6cbc3c" stroke-width="7" /><path d="M19 18l18 15-8 1 5 5-5 1-4-5-6 4z" fill="#fff" /></svg>
        <span>ClickMeeting</span>
      </div>
      <h1>Deep Learning in Computer Vision - Week 0</h1>
      <div class="cell signal"><svg viewBox="0 0 42 28"><path d="M3 20v8M15 12v16M27 6v22M39 0v28" stroke="#fff" stroke-width="6" /></svg></div>
      <div class="cell lang-cell">
        <svg class="flag" viewBox="0 0 30 22"><rect width="30" height="22" fill="#fff" /><path d="M0 1h30M0 5h30M0 9h30M0 13h30M0 17h30M0 21h30" stroke="#e01f36" stroke-width="2" /><rect width="17" height="13" fill="#3c4a96" /><path d="M2 3h13M2 6h13M2 9h13" stroke="#c9cfea" stroke-dasharray="2 2" /></svg>
        <button class="full" aria-label="Full screen">{@render expand()}</button>
      </div>
      <button class="cell info">{@render gear()}<span>Info</span></button>
      <div class="cell timer"><svg viewBox="0 0 28 28"><circle cx="14" cy="14" r="12" fill="none" stroke="#fff" stroke-width="3" /><path d="M14 6v9l5 4" fill="none" stroke="#fff" stroke-width="2" /></svg><span>01:50:43</span></div>
      <button class="exit">EXIT</button>
    </header>

    <p class="banner"><svg viewBox="0 0 26 26" aria-hidden="true"><circle cx="13" cy="13" r="13" fill="#0f78a8" /><path d="M14 5v3M14 11l-2 8h3" stroke="#5cc3ec" stroke-width="2" fill="none" /></svg><span>You're attending a meeting organized with the trial version of Clickmeeting. Click <a href="#here">here</a> to start your own online meeting and webinars with Clickmeeting.</span></p>

    <div class="room">
      <div class="side">
        <section class="panel camera">
          <div class="phead"><h2>CAMERA AND VOICE</h2><span class="tools"><button aria-label="Camera settings">{@render gear()}</button><button aria-label="Expand camera">{@render expand()}</button></span></div>
          <div class="video">
            <svg viewBox="0 0 206 147" aria-hidden="true"><path d="M4 4h137v54l61-39v107l-61-39v56H4z" fill="none" stroke="#313541" stroke-width="8" stroke-linejoin="round" /></svg>
            <div class="audio"><span>Audio attendee:</span><b>Ngon Le</b></div>
          </div>
        </section>

        <section class="panel attendees">
          <div class="phead short"><h2>ATTENDEE LIST</h2></div>
          <div class="alist">
            <ul>
              {#each attendees as name}
                <li><svg viewBox="0 0 28 27" aria-hidden="true"><path d="M1 26v-4q1-4 8-5 2-1 2-3-3-4-2-9 1-4 5-4t5 4q1 5-2 9 0 2 2 3 7 1 8 5v4z" fill="none" stroke="#3a3d48" stroke-width="2" /></svg><span>{name}</span></li>
              {/each}
            </ul>
            <div class="track"><span class="thumb"></span></div>
          </div>
        </section>

        <section class="panel chat">
          <div class="phead short"><h2>CHAT</h2><span class="tools"><button class="translate">Translate</button><button aria-label="Chat settings">{@render gear()}</button></span></div>
          <div class="log">
            {#each messages as [who, text]}<p>{#if who}<b>{who}</b>{' '}{/if}{text}</p>{/each}
            <div class="track"><span class="thumb dot"></span></div>
          </div>
          <form class="compose" onsubmit={(e) => e.preventDefault()}>
            <input aria-label="Message" placeholder="Write a message" bind:value={message} />
            <button><span>SEND</span><svg viewBox="0 0 24 18" aria-hidden="true"><path d="M23 0v12H11v6L0 9l11-8v6h6V0z" fill="#fff" /></svg></button>
          </form>
        </section>
        <p class="powered">Powered by <a href="#clickmeeting">ClickMeeting.com</a> - Host your own webinar</p>
      </div>

      <section class="panel share">
        <div class="phead"><h2>SHARE</h2><span class="tools"><button aria-label="Expand share">{@render expand()}</button></span></div>
        <svg class="slide" viewBox="788 460 2070 1146" role="img" aria-label="Linear Algebra slide">
          <text x="960" y="593" class="title">Linear Algebra (Đại số tuyến tính)</text>
          <g class="body">
            <text x="808" y="717" class="b">Vector</text>
            <text x="910" y="779">Dot product (tích vô hướng)</text>
            <text x="910" y="964">Length (độ dài)</text>
            <text x="910" y="1148">Góc giữa 2 vector</text>
            <text x="910" y="1272">Orthogonal (trực giao)</text>
            <text x="910" y="1396"><tspan class="b">Norm</tspan> Lp</text>
            <text x="1815" y="1519">L2: length</text>
          </g>
          {#each glyphs as [t, x, y, s]}<text {x} {y} class="math {s}">{t}</text>{/each}
          {#each bars as [x, a, b]}<path d="M{x} {a}V{b}" class="rule" />{/each}
          <path d="M1432 939l7-4 9 22 14-60h87" class="rule" />
          <path d="M1617 1019l8-4 13 32 11-225h132" class="rule" />
          <path d="M2422 1471l8-5 14 33 13-243h184" class="rule" />
        </svg>
      </section>
    </div>
  </main>

  <footer class="wall">
    <div class="dock">
      {#each dock as [kind, running]}
        <button class="slot" aria-label={kind}>{@render dockIcon(kind)}{#if running}<span class="run"></span>{/if}</button>
      {/each}
      <span class="sep"></span>
      <button class="slot" aria-label="Trash">{@render dockIcon('trash')}</button>
    </div>
  </footer>
</div>

<style>
  :global(body) { margin: 0; background: #2b5060; }
  * { box-sizing: border-box; }
  button { border: 0; padding: 0; background: none; font: inherit; color: inherit; display: flex; align-items: center; }
  a { color: inherit; text-decoration: none; }
  h1, h2, p, ul { margin: 0; padding: 0; font-weight: inherit; }
  i { font-style: normal; }
  svg { display: block; flex: none; }
  .sans { font-family: Inter, sans-serif; }
  .serif { font-family: 'Liberation Serif', serif; }
  .b { font-weight: 700; }

  .desktop { min-height: 100vh; display: flex; flex-direction: column; font-family: Inter, sans-serif; background: linear-gradient(90deg, #8d98a8, #38596b 30%, #0b3d4c 60%, #06323f); }

  .menubar { height: 44px; margin-bottom: 2px; display: flex; align-items: center; padding: 0 46px 0 40px; color: #3d4043; font-size: 27px; background: linear-gradient(90deg, #f6f7fa, #eef3f8 44%, #cde2e7 56%, #c8e0e5 66%, #d4e5ea 76%, #e5ecf4 85%, #dce8ef 92%, #c8dde2); }
  .apple { width: 32px; height: 32px; margin-right: 37px; }
  .menus { display: flex; gap: 38px; }
  .menus b { font-weight: 600; }
  .status { margin-left: auto; display: flex; align-items: center; color: #222d33; }
  .w16 { width: 16px; height: 36px; margin-left: 8px; }
  .w20 { width: 20px; } .w30 { width: 30px; } .w32 { width: 32px; margin-left: 24px; } .w36 { width: 36px; } .w40 { width: 40px; } .w42 { width: 42px; } .w46 { width: 46px; margin-left: 10px; }
  .stack3 { display: flex; flex-direction: column; align-items: center; font-size: 15px; line-height: 12px; font-weight: 800; color: #565e61; width: 17px; }
  .stack3.hdd { margin-left: 16px; } .stack3.cpu { margin-left: 16px; }
  .stack3 + .w36 { margin-left: 8px; }
  .two { font-size: 19px; line-height: 18px; color: #222; white-space: nowrap; }
  .mem { width: 68px; margin-left: 22px; } .temp { width: 34px; margin-left: 12px; }
  .rate { width: 92px; margin-left: 14px; text-align: right; }
  .pct { font-size: 25px; margin-left: 18px; width: 54px; }
  .arrows { margin-left: 19px; }
  .clean { margin-left: 22px; } .bt { margin-left: 31px; } .wifi { margin-left: 30px; } .air { margin-left: 25px; } .vol { margin-left: 24px; }
  .lang { width: 32px; height: 32px; margin-left: 22px; border-radius: 5px; background: #22313a; color: #fff; font-size: 15px; line-height: 15px; display: flex; flex-direction: column; align-items: center; justify-content: center; }
  .lang i { color: #aab4b9; }
  .batt { margin-left: 27px; font-size: 23px; }
  .clock { margin-left: 39px; } .user { margin-left: 31px; font-weight: 600; }
  .find { margin-left: 31px; } .list { margin-left: 31px; }

  .window { flex: 1; display: flex; flex-direction: column; background: #f9fafc; border-radius: 10px 10px 12px 12px; overflow: hidden; }

  .tabstrip { height: 73px; display: flex; align-items: flex-end; background: linear-gradient(90deg, #d8dade, #cfd0d1 10%, #d0d0d0 75%, #bccccf 90%, #b5c9cf); border-bottom: 1px solid #8a8a8a; }
  .lights { display: flex; gap: 16px; width: 145px; padding: 0 0 23px 24px; }
  .lights button { width: 24px; height: 24px; border-radius: 50%; }
  .red { background: #fc5b57; } .amber { background: #fdbc40; } .green { background: #34c84a; }
  .tabs { flex: 1; height: 57px; margin-bottom: -1px; display: grid; grid-template-columns: repeat(29, 1fr); }
  .tab { position: relative; display: flex; align-items: center; padding: 2px 0 0 30px; min-width: 0; }
  .shape { position: absolute; left: 0; top: 0; width: calc(100% + 26px); height: 57px; }
  .shape path { fill: #cfcfcf; stroke: #8f8f8f; stroke-width: 1.5; }
  .active .shape path { fill: #f2f2f2; }
  .fav { width: 32px; height: 32px; position: relative; }
  .label { position: relative; margin-left: 12px; width: 16px; flex: none; overflow: hidden; white-space: nowrap; font-size: 25px; color: #000; mask-image: linear-gradient(90deg, #000 60%, transparent); }
  .active .label { width: 24px; margin-left: 4px; color: #222; }
  .close { position: relative; margin-left: 6px; }
  .close svg { width: 16px; height: 16px; }
  .strip-end { width: 174px; display: flex; align-items: flex-start; height: 40px; }
  .newtab { margin-left: 22px; }
  .newtab svg { width: 66px; height: 32px; }
  .profile { margin-left: 21px; margin-top: -8px; font-size: 24px; }

  .toolbar { height: 73px; display: flex; align-items: center; gap: 29px; padding: 2px 19px 0 21px; background: #f2f2f2; }
  .nav svg { width: 28px; height: 28px; }
  .omnibox { flex: 1; margin-left: -7px; height: 54px; display: flex; align-items: center; padding: 0 12px 0 16px; background: #fff; border: 2px solid #b8b8b8; border-radius: 6px; font-size: 27px; }
  .lock { width: 16px; height: 22px; }
  .secure { color: #188045; margin-left: 17px; }
  .bar { width: 1px; height: 32px; background: #bbb; margin: 0 14px 0 12px; }
  .url { flex: 1; color: #000; }
  .g { color: #188045; } .m { color: #808080; }
  .star { width: 30px; height: 28px; }
  .exts { display: flex; align-items: center; gap: 22px; margin-left: -9px; }
  .exts svg { width: 34px; height: 34px; }
  .dots { fill: #555; }

  .bookmarks { height: 48px; display: flex; align-items: center; gap: 29px; padding: 0 22px 8px 24px; background: #f2f2f2; border-bottom: 2px solid #d2d2d2; font-size: 24px; color: #000; }
  .bookmarks a { display: flex; align-items: center; gap: 8px; white-space: nowrap; }
  .more { margin-left: auto; color: #666; }

  .cm-head { height: 80px; display: flex; align-items: center; background: #292d38; border-bottom: 3px solid #20232b; color: #fff; font-family: Roboto, sans-serif; }
  .logo { width: 387px; margin-left: 51px; padding-top: 4px; display: flex; align-items: center; gap: 5px; font-family: Lato, sans-serif; font-size: 32px; font-weight: 700; }
  .logo svg { width: 38px; height: 40px; }
  h1 { font-size: 30px; font-weight: 500; flex: 1; }
  .cell { height: 77px; display: flex; align-items: center; border-right: 2px solid #454954; }
  .signal { padding-right: 28px; } .signal svg { width: 42px; height: 28px; margin-bottom: 8px; }
  .lang-cell { width: 189px; padding-left: 43px; gap: 62px; }
  .flag { width: 30px; height: 22px; } .full svg { width: 30px; height: 30px; }
  .info { width: 140px; padding: 4px 0 0 26px; gap: 10px; font-size: 24px; font-weight: 500; } .info svg { width: 28px; height: 28px; }
  .timer { border: 0; padding: 0 38px 0 52px; gap: 16px; font-size: 28px; font-weight: 500; } .timer svg { width: 28px; height: 28px; }
  .exit { height: 42px; width: 88px; margin-right: 21px; justify-content: center; background: #6fba44; border-radius: 4px; font-size: 19px; font-weight: 500; }

  .banner { height: 60px; display: flex; align-items: center; justify-content: center; gap: 18px; padding: 2px 44px 0 0; background: linear-gradient(#1fadec, #1ca7e4); border-radius: 6px; color: #fff; font: 900 27px Roboto, sans-serif; }
  .banner svg { width: 26px; height: 26px; }
  .banner a { color: #000; }

  .room { flex: 1; display: grid; grid-template-columns: 1fr 3fr; gap: 73px; padding: 25px 21px 0 22px; }
  .side { display: flex; flex-direction: column; font-family: 'DejaVu Sans', sans-serif; }
  .panel { background: #fff; border: 2px solid #f2f4f6; border-radius: 4px; }
  .phead { height: 53px; display: flex; align-items: center; padding: 10px 16px 0 13px; border-bottom: 3px solid #f3f4f6; color: #68727e; font-family: Roboto, sans-serif; }
  .phead.short { height: 52px; }
  h2 { font-size: 22px; font-weight: 600; }
  .tools { margin-left: auto; margin-top: -9px; display: flex; gap: 12px; color: #969ba1; }
  .tools svg { width: 20px; height: 20px; }
  .translate { font-size: 21px; font-weight: 500; color: #a9b0c3; margin-right: 20px; }
  .camera { border-bottom: 0; }
  .video { height: 412px; margin: 0 -2px; display: grid; background: #292d38; border-radius: 0 0 6px 6px; }
  .video > * { grid-area: 1 / 1; }
  .video > svg { width: 206px; height: 147px; place-self: center; margin-bottom: 41px; }
  .audio { align-self: end; justify-self: start; padding: 0 0 30px 20px; display: flex; flex-direction: column; align-items: flex-start; gap: 6px; font-size: 20px; line-height: 28px; color: #a0a0a0; }
  .audio span { padding-left: 4px; }
  .audio b { font-family: 'Noto Sans', sans-serif; font-size: 20px; line-height: 32px; padding: 0 14px; border-radius: 16px; background: #4b4b4d; color: #fff; }
  .attendees { margin-top: 18px; }
  .alist { display: flex; height: 306px; }
  ul { list-style: none; flex: 1; border-right: 2px solid #ececee; }
  li { height: 50px; display: flex; align-items: center; gap: 17px; padding-left: 10px; font-size: 20px; color: #292d38; }
  li svg { width: 27px; height: 26px; }
  .alist .track { margin: 2px 10px 0 68px; display: flex; align-items: flex-end; }
  .track { width: 12px; border-radius: 6px; background: #f2f2f3; }
  .thumb { width: 12px; height: 44px; border-radius: 6px 6px 0 0; background: #999; }
  .chat { flex: 1; display: flex; flex-direction: column; }
  .log { position: relative; height: 223px; padding: 7px 12px 0 22px; font-size: 20px; line-height: 28px; color: #000; border-bottom: 2px solid #f2f3f4; }
  .log .track { position: absolute; right: 10px; top: 6px; bottom: -2px; display: flex; align-items: flex-end; opacity: .9; }
  .thumb.dot { height: 12px; border-radius: 50%; margin-bottom: 4px; }
  .compose { flex: 1; display: flex; align-items: center; padding: 2px 12px 0 22px; }
  .compose input { flex: 1; min-width: 0; border: 0; padding: 0 0 6px; background: none; outline: 0; font: 18px 'DejaVu Sans', sans-serif; color: #333; }
  .compose input::placeholder { color: #bdbdbd; opacity: 1; }
  .compose button { height: 40px; width: 124px; justify-content: center; gap: 12px; padding-left: 13px; background: #6fba44; border-radius: 4px; color: #fff; font: 500 20px Roboto, sans-serif; }
  .compose button svg { width: 24px; height: 18px; }
  .powered { padding: 4px 0 7px 17px; font-size: 20px; line-height: 28px; color: #fff; }
  .powered a { color: #63e83c; }

  .share { margin-bottom: 30px; }
  .slide { width: 100%; height: auto; }
  .title { font-family: 'Liberation Sans', sans-serif; font-size: 114px; }
  .body { font-family: 'Liberation Serif', serif; font-size: 51px; }
  .math { font-family: 'Liberation Serif', serif; font-style: italic; font-size: 58px; fill: #3c3c3c; stroke: #3c3c3c; stroke-width: 1; }
  .s { font-size: 40px; } .n { font-size: 38px; font-style: normal; } .u { font-style: normal; }
  .w { font-size: 68px; } .t { font-size: 46px; }
  .o, .p, .arr { font-family: 'DejaVu Sans', sans-serif; font-style: normal; stroke: none; }
  .o { font-size: 46px; } .p { font-size: 54px; } .arr { font-size: 62px; }
  .sum { font-style: normal; font-size: 112px; fill: #111; stroke: none; }
  .rule { fill: none; stroke: #3c3c3c; stroke-width: 4; }

  .wall { height: 162px; display: flex; justify-content: center; background: linear-gradient(170deg, transparent 40%, rgba(190, 215, 228, .55) 62%, transparent 80%) 0 0 / 366px 162px no-repeat, linear-gradient(#59646c, #5d8498 60%, #6792a8) 0 0 / 366px 162px no-repeat, linear-gradient(100deg, #0d343d, #10525f 50%, #06222c); }
  .dock { display: flex; padding: 0 7px 0 8px; border-radius: 12px 12px 0 0; background: linear-gradient(180deg, rgba(110, 120, 135, .35), transparent 60%), linear-gradient(90deg, #9bbfd4, #6fa0b8 18%, #4b8298 35%, #66a8c4 52%, #4492ad 72%, #347f95 88%, #4397ae); box-shadow: 0 0 50px rgba(0, 0, 0, .2); }
  .slot { width: 138px; height: 162px; position: relative; }
  .dock-svg { width: 138px; height: 162px; }
  .run { position: absolute; left: 65px; bottom: 5px; width: 8px; height: 8px; border-radius: 50%; background: #0b3347; }
  .sep { width: 2px; height: 118px; margin: 22px 30px 0; background: #2b6a7e; }
</style>
